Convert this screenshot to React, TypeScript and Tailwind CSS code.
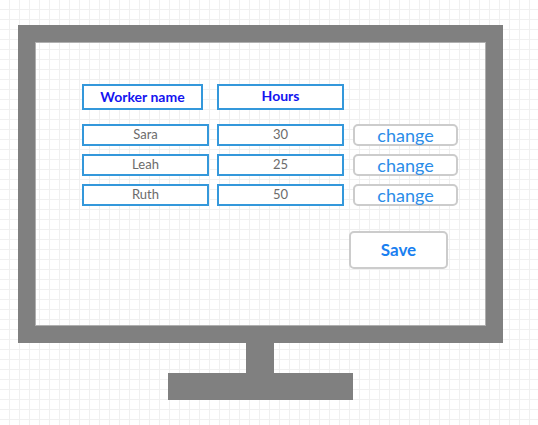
import React from 'react';

type Row = { name: string; hours: number };

const rows: Row[] = [
  { name: 'Sara', hours: 30 },
  { name: 'Leah', hours: 25 },
  { name: 'Ruth', hours: 50 },
];

export default function App() {
  return (
    <div
      className="w-[538px] h-[425px] overflow-hidden bg-white bg-[linear-gradient(to_right,#f0f0f0_1px,transparent_1px),linear-gradient(to_bottom,#f0f0f0_1px,transparent_1px)] bg-[size:10px_10px] bg-[position:9px_9px] pt-[25px]"
      style={{ fontFamily: 'Lato, "Open Sans", sans-serif' }}
    >
      {/* Monitor frame */}
      <div className="ml-[18px] w-[485px] h-[318px] border-[17px] border-[#808080] outline outline-1 outline-[#b0b0b0] -outline-offset-[18px] box-border">
        <div className="pl-[47px] pt-[42px]">
          {/* Header */}
          <div className="flex gap-[14px]">
            <div className="w-[121px] h-[26px] border-2 border-[#3498db] bg-white flex items-center justify-center text-[14px] font-bold text-[#1414f0] pb-[2px]">
              Worker name
            </div>
            <div className="w-[127px] h-[26px] border-2 border-[#3498db] bg-white flex items-center justify-center text-[14px] font-bold text-[#1414f0] pb-[3px]">
              Hours
            </div>
          </div>

          {/* Rows */}
          <div className="mt-[14px] flex flex-col gap-[8px]">
            {rows.map((row) => (
              <div key={row.name} className="flex items-center">
                <div className="w-[127px] h-[22px] border-2 border-[#3498db] bg-white flex items-center justify-center text-[13px] text-[#6b6b6b]">
                  {row.name}
                </div>
                <div className="ml-[8px] w-[127px] h-[22px] border-2 border-[#3498db] bg-white flex items-center justify-center text-[13px] text-[#6b6b6b]">
                  {row.hours}
                </div>
                <button className="ml-[9px] w-[105px] h-[22px] border-2 border-[#cccccc] rounded-[5px] bg-white flex items-center justify-center text-[18px] leading-none text-[#2b8ce8] pb-[1px]">
                  change
                </button>
              </div>
            ))}
          </div>

          {/* Save */}
          <div className="mt-[25px] ml-[267px]">
            <button className="w-[99px] h-[38px] border-2 border-[#cccccc] rounded-[5px] bg-white flex items-center justify-center text-[17px] font-bold text-[#1a80f0]">
              Save
            </button>
          </div>
        </div>
      </div>

      {/* Stand */}
      <div className="ml-[246px] w-[28px] h-[30px] bg-[#808080]" />
      <div className="ml-[168px] w-[185px] h-[27px] bg-[#808080]" />
    </div>
  );
}
